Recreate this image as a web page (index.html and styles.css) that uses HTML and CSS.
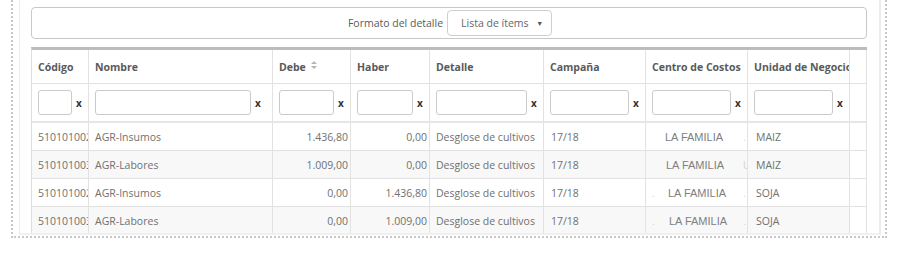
FILE: index.html
```html
<!DOCTYPE html>
<html lang="es">
<head>
<meta charset="utf-8">
<title>Detalle</title>
<link rel="stylesheet" href="styles.css">
</head>
<body>
<div class="outer">
  <div class="panel">
    <div class="format-bar">
      <span class="format-label">Formato del detalle</span>
      <div class="select"><span class="select-text">Lista de ítems</span><span class="caret">▼</span></div>
    </div>
    <table class="grid">
      <thead>
        <tr class="head">
          <th class="c1">Código</th>
          <th class="c2">Nombre</th>
          <th class="c3">Debe <svg class="sort" width="6" height="8" viewBox="0 0 6 8"><path d="M0 3 L3 0 L6 3 Z M0 5 L6 5 L3 8 Z" fill="#b5b5b5"/></svg></th>
          <th class="c4">Haber</th>
          <th class="c5">Detalle</th>
          <th class="c6">Campaña</th>
          <th class="c7">Centro de Costos</th>
          <th class="c8">Unidad de Negocio</th>
          <th class="c9 blank"></th>
        </tr>
        <tr class="filters">
          <td><div class="filter"><input class="finput" type="text"><span class="fx">x</span></div></td>
          <td><div class="filter filter-wide"><input class="finput" type="text"><span class="fx">x</span></div></td>
          <td><div class="filter"><input class="finput" type="text"><span class="fx">x</span></div></td>
          <td><div class="filter"><input class="finput" type="text"><span class="fx">x</span></div></td>
          <td><div class="filter"><input class="finput" type="text"><span class="fx">x</span></div></td>
          <td><div class="filter"><input class="finput" type="text"><span class="fx">x</span></div></td>
          <td><div class="filter"><input class="finput" type="text"><span class="fx">x</span></div></td>
          <td><div class="filter"><input class="finput" type="text"><span class="fx">x</span></div></td>
          <td class="blank"></td>
        </tr>
      </thead>
      <tbody>
        <tr>
          <td>510101002</td>
          <td>AGR-Insumos</td>
          <td class="num">1.436,80</td>
          <td class="num">0,00</td>
          <td>Desglose de cultivos</td>
          <td class="camp">17/18</td>
          <td class="cc"><div class="cc-in"><span class="ghost"></span><span class="fam fam1">LA FAMILIA</span><span class="ghost">.</span></div></td>
          <td class="un">MAIZ</td>
          <td class="blank"></td>
        </tr>
        <tr>
          <td>510101003</td>
          <td>AGR-Labores</td>
          <td class="num">1.009,00</td>
          <td class="num">0,00</td>
          <td>Desglose de cultivos</td>
          <td class="camp">17/18</td>
          <td class="cc"><div class="cc-in"><span class="ghost"></span><span class="fam fam2">LA FAMILIA</span><span class="ghost">U</span></div></td>
          <td class="un">MAIZ</td>
          <td class="blank"></td>
        </tr>
        <tr>
          <td>510101002</td>
          <td>AGR-Insumos</td>
          <td class="num">0,00</td>
          <td class="num">1.436,80</td>
          <td>Desglose de cultivos</td>
          <td class="camp">17/18</td>
          <td class="cc"><div class="cc-in"><span class="ghost">.</span><span class="fam fam3">LA FAMILIA</span><span class="ghost">.</span></div></td>
          <td class="un">SOJA</td>
          <td class="blank"></td>
        </tr>
        <tr>
          <td>510101003</td>
          <td>AGR-Labores</td>
          <td class="num">0,00</td>
          <td class="num">1.009,00</td>
          <td>Desglose de cultivos</td>
          <td class="camp">17/18</td>
          <td class="cc"><div class="cc-in"><span class="ghost">.</span><span class="fam fam4">LA FAMILIA</span><span class="ghost">.</span></div></td>
          <td class="un">SOJA</td>
          <td class="blank"></td>
        </tr>
      </tbody>
    </table>
  </div>
</div>
</body>
</html>
```
FILE: styles.css
```css
* { box-sizing: border-box; }

html, body {
  margin: 0;
  padding: 0;
  background: #fff;
}

body {
  font-family: "Open Sans", "Liberation Sans", sans-serif;
  font-size: 10.5px;
  color: #555;
}

.outer {
  margin-left: 11px;
  width: 876px;
  height: 238px;
  border-left: 2px dotted #c8c8c8;
  border-right: 2px dotted #c8c8c8;
  border-bottom: 2px dotted #c8c8c8;
  padding: 0 4px 1px 6px;
}

.panel {
  height: 235px;
  border-left: 1px solid #ececec;
  border-right: 2px solid #ececec;
  border-bottom: 2px solid #f0f0f0;
  padding: 7px 12px 0 11px;
  overflow: hidden;
}

.format-bar {
  height: 32px;
  border: 1px solid #c8c8c8;
  border-radius: 4px;
  display: flex;
  align-items: center;
  justify-content: center;
  padding-left: 2px;
  margin-bottom: 8px;
}

.format-label {
  margin-right: 4px;
  color: #5a5a5a;
}

.select {
  width: 105px;
  height: 26px;
  border: 1px solid #cfcfcf;
  border-radius: 4px;
  display: flex;
  align-items: center;
  padding-left: 13px;
  color: #666;
}

.select-text { flex: 1; }

.caret {
  font-size: 7px;
  color: #555;
  margin-right: 8px;
}

.grid {
  width: 836px;
  table-layout: fixed;
  border-collapse: separate;
  border-spacing: 0;
  border-top: 3px solid #bcbcbc;
  border-left: 1px solid #dedede;
}

.grid th,
.grid td {
  border-right: 1px solid #e2e2e2;
  border-bottom: 1px solid #e2e2e2;
  padding: 0 2px 0 6px;
  white-space: nowrap;
  overflow: hidden;
  vertical-align: middle;
  text-align: left;
}

.c1 { width: 57px; }
.c2 { width: 184px; }
.c3 { width: 78px; }
.c4 { width: 79px; }
.c5 { width: 114px; }
.c6 { width: 102px; }
.c7 { width: 102px; }
.c8 { width: 102px; }
.c9 { width: 17px; }

.head th {
  height: 34px;
  font-weight: 700;
  color: #5a5a5a;
}

.sort {
  margin-left: 2px;
  vertical-align: 2px;
}

.filters td {
  height: 39px;
  border-bottom: 2px solid #e6e6e6;
  padding-right: 6px;
}

.filter {
  display: flex;
  align-items: center;
}

.finput {
  flex: 1;
  min-width: 0;
  height: 25px;
  border: 1px solid #cacaca;
  border-radius: 3px;
  background: #fff;
  margin: 0;
  padding: 0;
}

.fx {
  width: 10px;
  padding-left: 4px;
  font-size: 10px;
  font-weight: 700;
  color: #333;
  line-height: 1;
}

.filter-wide .fx {
  width: 15px;
  padding-left: 4px;
}

.grid tbody td {
  height: 28px;
  color: #707070;
}

.grid tbody tr:nth-child(even) td {
  background: #f8f8f8;
}

.grid tbody tr td.blank,
.grid tbody tr:nth-child(even) td.blank {
  background: #fff;
}

.grid td.num {
  text-align: right;
  padding-right: 2px;
}

.grid td.camp { padding-left: 7px; }
.grid td.un { padding-left: 8px; }

.grid td.cc { padding: 0 0 0 6px; }

.cc-in {
  display: flex;
  align-items: center;
}

.ghost {
  color: #d6d6d6;
  width: 8px;
  font-family: "Liberation Sans", sans-serif;
}

.ghost:last-child {
  margin-left: auto;
  width: 4px;
}

.fam {
  font-family: "Liberation Sans", Arial, sans-serif;
  font-size: 11px;
  color: #808080;
}

.fam1 { margin-left: 5px; }
.fam2 { margin-left: 6px; }
.fam3 { margin-left: 8px; }
.fam4 { margin-left: 9px; }
```
